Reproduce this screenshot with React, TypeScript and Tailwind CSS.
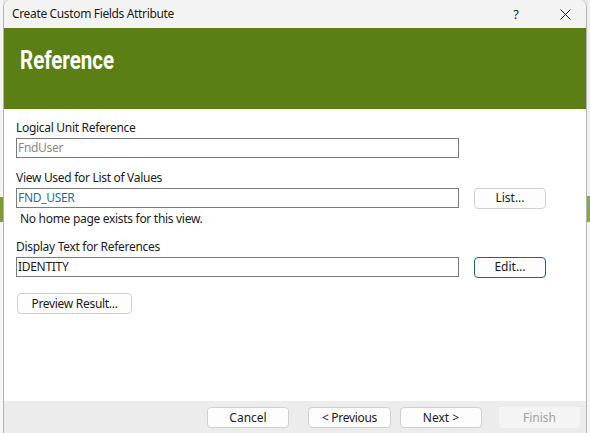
import React from "react";

const font = { fontFamily: '"Noto Sans", "Open Sans", sans-serif' };

function Btn({ children, className = "" }: { children: React.ReactNode; className?: string }) {
  return (
    <div
      className={
        "flex h-[21px] items-center justify-center rounded-[4px] border bg-[#fdfdfd] text-[12px] text-[#1b1b1b] " +
        className
      }
    >
      {children}
    </div>
  );
}

export default function App() {
  return (
    <div
      className="flex h-[433px] w-[590px] overflow-hidden bg-[#e4e4e4] text-[12px] leading-[16px] text-[#1b1b1b]"
      style={font}
    >
      <div className="flex w-[3px] flex-col bg-[#f4f4f4]">
        <div className="h-[197px]" />
        <div className="h-[25px] bg-[#7c9a3c]" />
        <div className="flex-1 bg-[#f6f6f6]" />
      </div>
      <div className="flex w-[584px] flex-col overflow-hidden rounded-t-[7px] border-x border-[#b4b4b4] bg-white">
        <div className="flex h-[28px] items-center bg-[#f3f3f3]">
          <span className="ml-[8px] tracking-[-0.35px]">Create Custom Fields Attribute</span>
          <span className="ml-auto mr-[41px] text-[13px]">?</span>
          <svg width="11" height="11" viewBox="0 0 11 11" className="mr-[15px]">
            <path d="M0.5 0.5 L10.5 10.5 M10.5 0.5 L0.5 10.5" stroke="#1b1b1b" strokeWidth="1" fill="none" />
          </svg>
        </div>
        <div className="flex h-[81px] items-start bg-[#5b7f14] pl-[16px] pt-[18px]">
          <span
            className="inline-block origin-left scale-x-[0.82] text-[25px] font-bold leading-[30px] text-white"
            style={{ fontFamily: '"Roboto", sans-serif' }}
          >
            Reference
          </span>
        </div>
        <div className="flex flex-1 flex-col pl-[12px] pt-[11px]">
          <div className="h-[16px] tracking-[-0.3px]">Logical Unit Reference</div>
          <div className="mt-[2px] flex h-[20px] w-[443px] items-center border border-[#7a7a7a] pl-[1px] text-[#8a8a8a] tracking-[-0.3px]">
            FndUser
          </div>
          <div className="mt-[12px] h-[16px] tracking-[-0.3px]">View Used for List of Values</div>
          <div className="mt-[2px] flex h-[20px] items-center">
            <div className="flex h-[20px] w-[443px] items-center border border-[#7a7a7a] pl-[1px] text-[#1f6e9c] tracking-[-0.3px]">
              FND_USER
            </div>
            <Btn className="ml-[15px] w-[72px] border-[#d0d0d0]">List...</Btn>
          </div>
          <div className="ml-[4px] mt-[3px] h-[16px] tracking-[-0.3px]">No home page exists for this view.</div>
          <div className="mt-[12px] h-[16px] tracking-[-0.3px]">Display Text for References</div>
          <div className="mt-[2px] flex h-[20px] items-center">
            <div className="flex h-[20px] w-[443px] items-center border border-[#7a7a7a] pl-[1px] tracking-[-0.3px]">
              IDENTITY
            </div>
            <Btn className="ml-[15px] w-[72px] border-[#1a5f8a]">Edit...</Btn>
          </div>
          <Btn className="ml-[1px] mt-[16px] w-[115px] border-[#d0d0d0] tracking-[-0.3px]">Preview Result...</Btn>
        </div>
        <div className="flex h-[32px] items-start bg-[#ececec] pt-[6px]">
          <Btn className="ml-[203px] w-[82px] border-[#d0d0d0]">Cancel</Btn>
          <Btn className="ml-[19px] w-[83px] border-[#d0d0d0] tracking-[-0.3px]">&lt; Previous</Btn>
          <Btn className="ml-[9px] w-[82px] border-[#d0d0d0]">Next &gt;</Btn>
          <div className="ml-[17px] flex h-[21px] w-[81px] items-center justify-center rounded-[4px] bg-[#f4f4f4] text-[12px] text-[#a0a0a0]">
            Finish
          </div>
        </div>
      </div>
      <div className="flex flex-1 flex-col bg-[#f6f6f6]">
        <div className="h-[196px] bg-[#f0f0f0]" />
        <div className="h-[26px] bg-[#8aa64a]" />
        <div className="flex-1" />
      </div>
    </div>
  );
}
